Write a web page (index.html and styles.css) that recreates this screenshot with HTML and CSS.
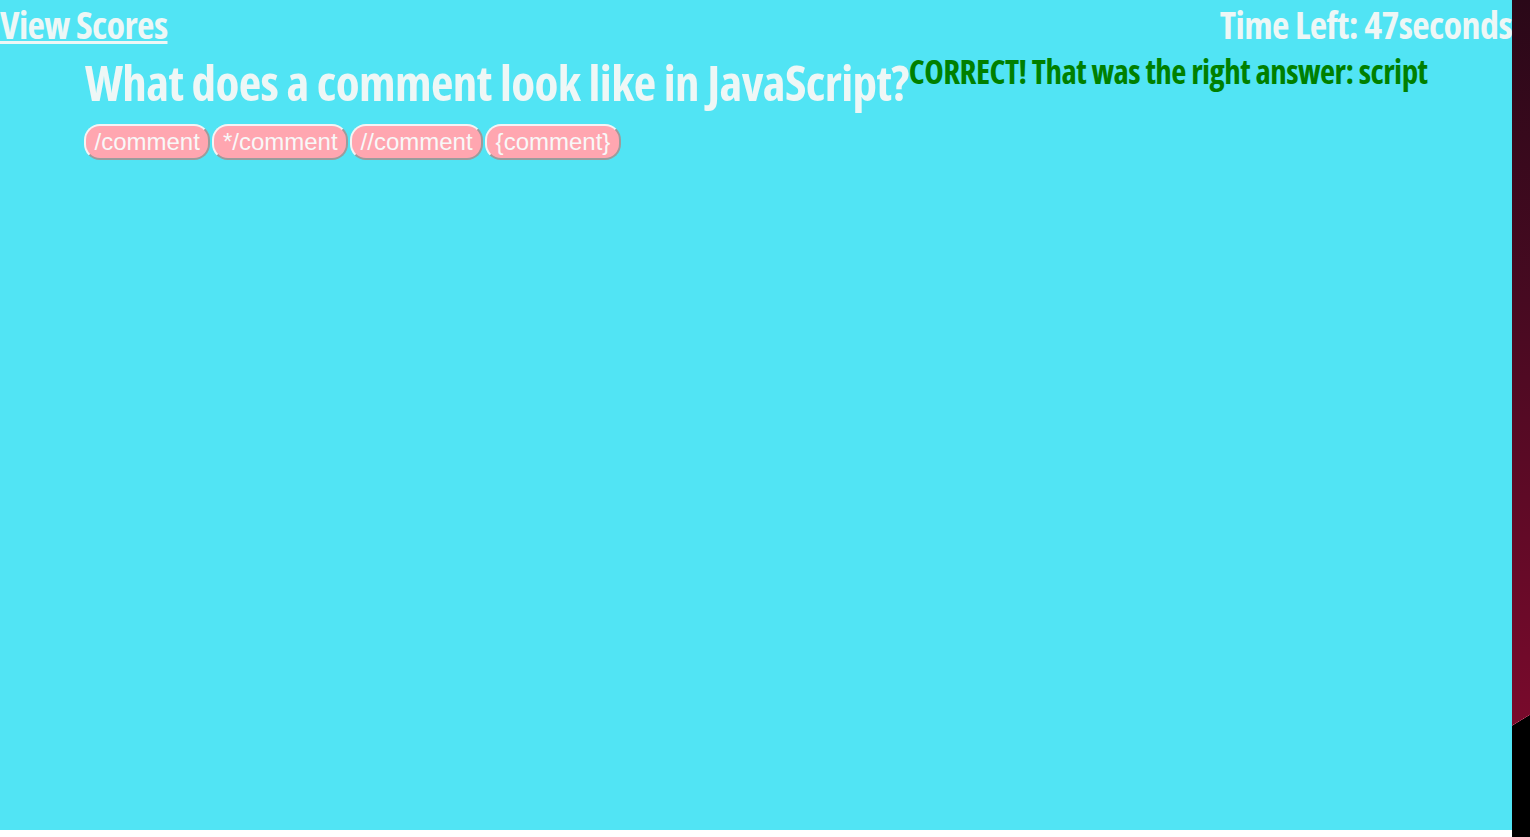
FILE: index.html
```html
<!DOCTYPE html>
<html lang="en">
<head>
<meta charset="utf-8">
<title>Quiz</title>
<link rel="stylesheet" href="styles.css">
</head>
<body>
<div class="app">
  <header class="topbar">
    <a class="scores-link" href="#">View Scores</a>
    <div class="timer">Time Left: 47seconds</div>
  </header>
  <main class="quiz-row">
    <section class="quiz">
      <h1 class="question">What does a comment look like in JavaScript?</h1>
      <div class="answers">
        <button class="answer">/comment</button>
        <button class="answer">*/comment</button>
        <button class="answer">//comment</button>
        <button class="answer">{comment}</button>
      </div>
    </section>
    <p class="feedback">CORRECT! That was the right answer: script</p>
  </main>
</div>
</body>
</html>
```
FILE: styles.css
```css
html {
  height: 100%;
  background:
    linear-gradient(148.6deg, transparent 49%, #c04a6a 50%, #000 52%) right 0 top 705px / 18px 30px no-repeat,
    linear-gradient(#000, #000) right 0 top 734px / 18px 200px no-repeat,
    linear-gradient(to bottom, #2a0818 0, #470a21 300px, #7a0a2c 735px) 0 0 / 100% 735px no-repeat,
    #000;
}
body {
  margin: 0;
  width: 1512px;
  min-height: 837px;
  background: #ffffff;
}
.app {
  height: 830px;
  background: #51e4f4;
  color: #eef7f6;
  font-family: "Open Sans", "DejaVu Sans Condensed", sans-serif;
  font-stretch: 75%;
  font-weight: 700;
}
.topbar {
  display: flex;
  justify-content: space-between;
  align-items: flex-start;
  height: 50px;
}
.scores-link {
  color: #eef7f6;
  font-size: 38px;
  line-height: 48px;
  letter-spacing: -0.6px;
  text-decoration: underline;
  text-decoration-thickness: 3px;
}
.timer {
  font-size: 38px;
  line-height: 48px;
  letter-spacing: -0.6px;
}
.quiz-row {
  display: flex;
  align-items: flex-start;
  padding-left: 85px;
}
.quiz {
  display: flex;
  flex-direction: column;
}
.question {
  margin: 0;
  font-size: 49px;
  line-height: 64px;
  font-weight: 700;
  letter-spacing: -0.6px;
  white-space: nowrap;
}
.answers {
  display: flex;
  gap: 2px;
  margin-top: 10px;
  margin-left: -1px;
}
.answer {
  height: 36px;
  padding: 0 8.5px;
  border: 2px solid #f4f4f4;
  border-right-color: #9c9c9c;
  border-bottom-color: #9c9c9c;
  border-radius: 16px;
  background: #ffa6b0;
  color: #f8f8f8;
  font-family: "Liberation Sans", Arial, sans-serif;
  font-size: 24px;
  font-weight: 400;
  line-height: 30px;
}
.feedback {
  margin: 0;
  color: #008000;
  font-size: 33px;
  line-height: 44px;
  letter-spacing: -0.55px;
}
```
